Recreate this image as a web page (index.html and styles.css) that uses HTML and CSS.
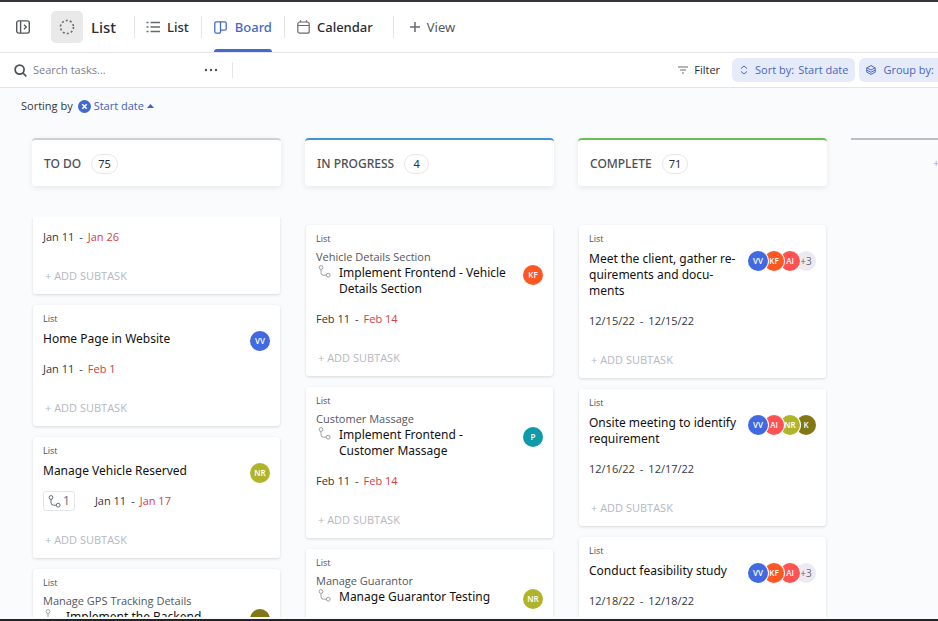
FILE: index.html
```html
<!DOCTYPE html>
<html lang="en">
<head>
<meta charset="utf-8">
<title>List – Board</title>
<link rel="stylesheet" href="styles.css">
</head>
<body>
<svg class="defs" aria-hidden="true">
  <symbol id="branch" viewBox="0 0 13 13"><g fill="none" stroke="currentColor"><circle cx="3" cy="2.5" r="1.9"/><circle cx="10.2" cy="10.2" r="1.9"/><path d="M3 4.5v3.2q0 2.5 2.5 2.5h2.7"/></g></symbol>
</svg>
<header class="views">
  <button class="panel" aria-label="Toggle sidebar"><svg width="14" height="14" viewBox="0 0 14 14" fill="none" stroke="#54575d" stroke-width="1.4"><rect x=".7" y=".9" width="12.6" height="12.2" rx="2"/><path d="M4.6 1v12M8 4.700l2.300 2.300L8 9.300"/></svg></button>
  <span class="space"><svg width="16" height="16" viewBox="0 0 16 16" fill="none" stroke="#666a70" stroke-width="1.6"><circle cx="8" cy="8" r="6.500" stroke-dasharray="2 2.084"/></svg></span>
  <h1>List</h1>
  <nav>
    <a href="#list"><svg width="14" height="12" viewBox="0 0 14 12" stroke="#656a72" stroke-width="1.3"><path d="M4.500 1.500H14M4.500 6H14M4.500 10.500H14M.5 1.500h2M.5 6h2M.5 10.500h2"/></svg>List</a>
    <a href="#board" class="active"><svg width="13" height="13" viewBox="0 0 13 13" fill="none" stroke="currentColor" stroke-width="1.3"><path d="M6.500.8H2.300Q.8.800.8 2.300v8.400q0 1.500 1.500 1.500h2.700q1.500 0 1.500-1.500zM6.500.8h4.200q1.500 0 1.500 1.500v5.400q0 1.500-1.500 1.500H6.500"/></svg>Board</a>
    <a href="#calendar"><svg width="13" height="14" viewBox="0 0 13 14" fill="none" stroke="#656a72" stroke-width="1.2"><rect x=".8" y="2" width="11.400" height="11.200" rx="2"/><path d="M.8 5.500h11.400M3.500.3v2M9.500.3v2"/></svg>Calendar</a>
    <a href="#view" class="add"><svg width="10" height="10" viewBox="0 0 10 10" stroke="#656a72" stroke-width="1.500"><path d="M5 0v10M0 5h10"/></svg>View</a>
  </nav>
</header>
<div class="tools">
  <label for="search"><svg width="13" height="13" viewBox="0 0 13 13" fill="none" stroke="#4c5057" stroke-width="1.700"><circle cx="5.600" cy="5.600" r="4.500"/><path d="M9 9l3.300 3.300"/></svg></label>
  <input id="search" type="text" placeholder="Search tasks..." aria-label="Search tasks">
  <button class="more" aria-label="More"><svg width="14" height="4" viewBox="0 0 14 4" fill="#4c5057"><circle cx="2" cy="2" r="1.200"/><circle cx="7" cy="2" r="1.200"/><circle cx="12" cy="2" r="1.200"/></svg></button>
  <div class="filters">
    <button class="filter"><svg width="10" height="8" viewBox="0 0 10 8" stroke="#9a9da2" stroke-width="1.300"><path d="M0 1h10M2 4h6M4 7h2"/></svg>Filter</button>
    <button class="chip"><svg width="8" height="10" viewBox="0 0 8 10" fill="none" stroke="currentColor"><path d="M1 3.500L4 1l3 2.500M1 6.500L4 9l3-2.500"/></svg><span>Sort by:</span><span>Start date</span></button>
    <button class="chip last"><svg width="10" height="10" viewBox="0 0 10 10" fill="none" stroke="currentColor"><path d="M5 .6l4.200 2.200L5 5 .8 2.800zM.8 5.100L5 7.300l4.200-2.200M.8 2.800v4.400L5 9.400l4.200-2.200V2.800"/></svg><span>Group by:</span></button>
  </div>
</div>
<main>
  <div class="sorting">Sorting by
    <button><svg width="13" height="13" viewBox="0 0 13 13"><circle cx="6.500" cy="6.500" r="6.500" fill="#4169cf"/><path d="M4.300 4.300l4.400 4.400M8.700 4.300L4.300 8.700" stroke="#fff" stroke-width="1.600"/></svg>Start date<svg width="7" height="4" viewBox="0 0 7 4"><path d="M0 4L3.500 0 7 4z" fill="currentColor"/></svg></button>
  </div>
  <div class="board">
    <section class="column todo">
      <h2>TO DO <span class="count">75</span></h2>
      <div class="cards scrolled">
        <article class="card">
          <p class="dates"><span>Jan 11</span><span>-</span><span class="late">Jan 26</span></p>
          <button class="subtask">+ ADD SUBTASK</button>
        </article>
        <article class="card">
          <p class="place">List</p>
          <div class="task"><h3>Home Page in Website</h3><div class="people"><span class="blue">VV</span></div></div>
          <p class="dates"><span>Jan 11</span><span>-</span><span class="late">Feb 1</span></p>
          <button class="subtask">+ ADD SUBTASK</button>
        </article>
        <article class="card">
          <p class="place">List</p>
          <div class="task"><h3>Manage Vehicle Reserved</h3><div class="people"><span class="lime">NR</span></div></div>
          <p class="dates"><span class="children"><svg width="13" height="13"><use href="#branch"/></svg>1</span><span>Jan 11</span><span>-</span><span class="late">Jan 17</span></p>
          <button class="subtask">+ ADD SUBTASK</button>
        </article>
        <article class="card">
          <p class="place">List</p>
          <p class="parent">Manage GPS Tracking Details</p>
          <div class="task child"><svg width="13" height="13"><use href="#branch"/></svg><h3>Implement the Backend</h3><div class="people"><span class="olive"></span></div></div>
        </article>
      </div>
    </section>
    <section class="column progress">
      <h2>IN PROGRESS <span class="count">4</span></h2>
      <div class="cards">
        <article class="card">
          <p class="place">List</p>
          <p class="parent">Vehicle Details Section</p>
          <div class="task child"><svg width="13" height="13"><use href="#branch"/></svg><h3>Implement Frontend - Vehicle Details Section</h3><div class="people"><span class="orange">KF</span></div></div>
          <p class="dates"><span>Feb 11</span><span>-</span><span class="late">Feb 14</span></p>
          <button class="subtask">+ ADD SUBTASK</button>
        </article>
        <article class="card">
          <p class="place">List</p>
          <p class="parent">Customer Massage</p>
          <div class="task child"><svg width="13" height="13"><use href="#branch"/></svg><h3>Implement Frontend - Customer Massage</h3><div class="people"><span class="teal">P</span></div></div>
          <p class="dates"><span>Feb 11</span><span>-</span><span class="late">Feb 14</span></p>
          <button class="subtask">+ ADD SUBTASK</button>
        </article>
        <article class="card">
          <p class="place">List</p>
          <p class="parent">Manage Guarantor</p>
          <div class="task child"><svg width="13" height="13"><use href="#branch"/></svg><h3>Manage Guarantor Testing</h3><div class="people"><span class="lime">NR</span></div></div>
          <p class="dates"></p>
        </article>
      </div>
    </section>
    <section class="column complete">
      <h2>COMPLETE <span class="count">71</span></h2>
      <div class="cards">
        <article class="card">
          <p class="place">List</p>
          <div class="task"><h3>Meet the client, gather re&shy;quirements and docu&shy;ments</h3><div class="people"><span class="blue">VV</span><span class="orange">KF</span><span class="red">AI</span><span class="extra">+3</span></div></div>
          <p class="dates"><span>12/15/22</span><span>-</span><span>12/15/22</span></p>
          <button class="subtask">+ ADD SUBTASK</button>
        </article>
        <article class="card">
          <p class="place">List</p>
          <div class="task"><h3>Onsite meeting to identify requirement</h3><div class="people"><span class="blue">VV</span><span class="red">AI</span><span class="lime">NR</span><span class="olive">K</span></div></div>
          <p class="dates"><span>12/16/22</span><span>-</span><span>12/17/22</span></p>
          <button class="subtask">+ ADD SUBTASK</button>
        </article>
        <article class="card">
          <p class="place">List</p>
          <div class="task"><h3>Conduct feasibility study</h3><div class="people"><span class="blue">VV</span><span class="orange">KF</span><span class="red">AI</span><span class="extra">+3</span></div></div>
          <p class="dates"><span>12/18/22</span><span>-</span><span>12/18/22</span></p>
        </article>
      </div>
    </section>
    <section class="column new"><button aria-label="Add column">+</button></section>
  </div>
</main>
</body>
</html>
```
FILE: styles.css
```css
* { box-sizing: border-box; }
body {
  margin: 0;
  height: 100vh;
  display: flex;
  flex-direction: column;
  overflow: hidden;
  border-top: 2px solid #38363c;
  border-bottom: 2px solid #232427;
  background: #fff;
  color: #292d34;
  font: 11px/16px "Open Sans", "Noto Sans", sans-serif;
}
.defs { position: absolute; width: 0; height: 0; }
svg { flex: none; }
h1, h2, h3, p { margin: 0; font-weight: 400; }
button { margin: 0; padding: 0; border: 0; background: none; font: inherit; color: inherit; }
a { color: inherit; text-decoration: none; }

.views { display: flex; align-items: center; height: 51px; flex: none; padding-left: 16px; border-bottom: 1px solid #e4e5e9; }
.panel { display: flex; }
.space { display: grid; place-items: center; width: 32px; height: 32px; margin: 0 8px 0 21px; border-radius: 5px; background: #e9e9ea; }
.views h1 { width: 43px; font: 500 15px/20px "Noto Sans", sans-serif; }
.views nav { display: flex; align-self: stretch; align-items: center; font: 500 13px/16px "Noto Sans", sans-serif; }
.views nav a { position: relative; display: flex; align-items: center; gap: 7px; height: 22px; padding: 0 12px; border-left: 1px solid #e4e5e9; }
.views nav a:first-child { padding-left: 11px; }
.views nav .active { color: #4569cb; gap: 8px; }
.views nav .active::after { content: ""; position: absolute; left: 12px; right: 12px; bottom: -14px; height: 3px; border-radius: 3px 3px 0 0; background: #4569cb; }
.views nav .add { margin-left: 8px; padding-left: 16px; font-weight: 400; color: #54575d; }

.tools { display: flex; align-items: center; height: 35px; flex: none; padding-left: 14px; border-bottom: 1px solid #e4e5e9; }
.tools label { display: flex; }
.tools input { width: 170px; padding: 0 6px; border: 0; outline: 0; font: inherit; color: inherit; }
.tools input::placeholder { color: #7c828d; opacity: 1; }
.more { display: flex; align-items: center; height: 16px; margin-left: 7px; padding-right: 14px; border-right: 1px solid #e4e5e9; }
.filters { display: flex; margin-left: auto; align-items: center; gap: 4px; white-space: nowrap; }
.filter { display: flex; align-items: center; gap: 6px; margin-right: 8px; }
.chip { display: flex; align-items: center; gap: 4px; height: 24px; padding: 0 7px 0 8px; border-radius: 6px; background: #e6ebfa; color: #4b66bd; }
.chip svg { margin-right: 3px; }
.chip.last { padding: 0 4px 0 7px; border-radius: 6px 0 0 6px; }

main { flex: 1; min-height: 0; display: flex; flex-direction: column; overflow: hidden; background: #fafbfd; }
.sorting { display: flex; gap: 5px; padding: 10px 21px 0; color: #33363c; }
.sorting button { display: flex; align-items: center; gap: 3px; color: #4162bd; }
.board { flex: 1; min-height: 0; display: flex; gap: 24px; padding: 24px 0 0 32px; }
.column { flex: none; width: 249px; display: flex; flex-direction: column; }
.column h2 { display: flex; align-items: center; gap: 10px; height: 48px; flex: none; padding: 2px 12px 0; border-top: 2px solid; border-radius: 4px; background: #fff; box-shadow: 0 2px 6px #00000014; font: 500 12px/16px "Noto Sans", sans-serif; color: #4c4f55; }
.todo h2 { border-top-color: #cfd0d4; }
.progress h2 { border-top-color: #4194d0; }
.complete h2 { border-top-color: #6bc04f; }
h2 .count { display: grid; place-items: center; min-width: 25px; height: 20px; padding: 0 6px; border: 1px solid #e6e7ee; border-radius: 10px; font-size: 11px; font-weight: 400; color: #292d34; }
.new { border-top: 2px solid #bcbec6; }
.new button { align-self: flex-start; margin: 15px 0 0 82px; color: #a6a9b2; }

.cards { flex: 1; min-height: 0; display: flex; flex-direction: column; gap: 11px; margin: 31px -3px 2px; padding: 8px 4px 0; overflow: hidden; }
.card { flex: none; padding: 8px 10px; border-radius: 3px; background: #fff; box-shadow: 0 1px 3px #00000024; }
.card .subtask { margin-bottom: 2px; }
.scrolled { padding-top: 0; }
.scrolled .card:first-child { padding-top: 0; border-radius: 0 0 3px 3px; }
.scrolled .card:first-child .dates { margin-top: 10px; }
.place { font-size: 9px; line-height: 12px; color: #4c4f55; }
.parent { margin-top: 3px; line-height: 17px; color: #54575d; }
.task { display: flex; margin-top: 6px; gap: 8px; }
.task h3 { flex: 1; font: 400 12px/16px "Noto Sans", sans-serif; color: #111; }
.task.child { margin-top: 0; }
.child svg { margin-left: 2px; color: #9a9da3; }
.child .people { margin-left: 4px; }
.people { display: flex; height: 16px; }
.people span { display: grid; place-items: center; flex: none; width: 20px; height: 20px; border-radius: 50%; color: #fff; font-size: 8px; font-weight: 600; line-height: 20px; }
.people span + span { margin-left: -4px; }
.people span:nth-child(1) { z-index: 4; }
.people span:nth-child(2) { z-index: 3; }
.people span:nth-child(3) { z-index: 2; }
.people span:not(:last-child) { box-shadow: 0 0 0 1px #fff; }
.people .blue { background: #4169e1; }
.people .orange { background: #ff5722; }
.people .red { background: #ff5252; }
.people .lime { background: #afb42b; }
.people .olive { background: #827717; }
.people .teal { background: #0e9aa7; }
.people .extra { background: #ebe9f1; color: #666a73; font-size: 10px; font-weight: 400; }
.dates { display: flex; align-items: center; gap: 5px; height: 20px; margin-top: 12px; color: #33363c; }
.late { color: #d33d44; }
.children { display: flex; align-items: center; gap: 2px; height: 20px; margin-right: 15px; padding: 0 4px; border: 1px solid #e4e5e9; border-radius: 3px; font-size: 12px; color: #656a72; }
.subtask { display: block; margin: 21px 0 0 2px; color: #b5b8c0; }
```
